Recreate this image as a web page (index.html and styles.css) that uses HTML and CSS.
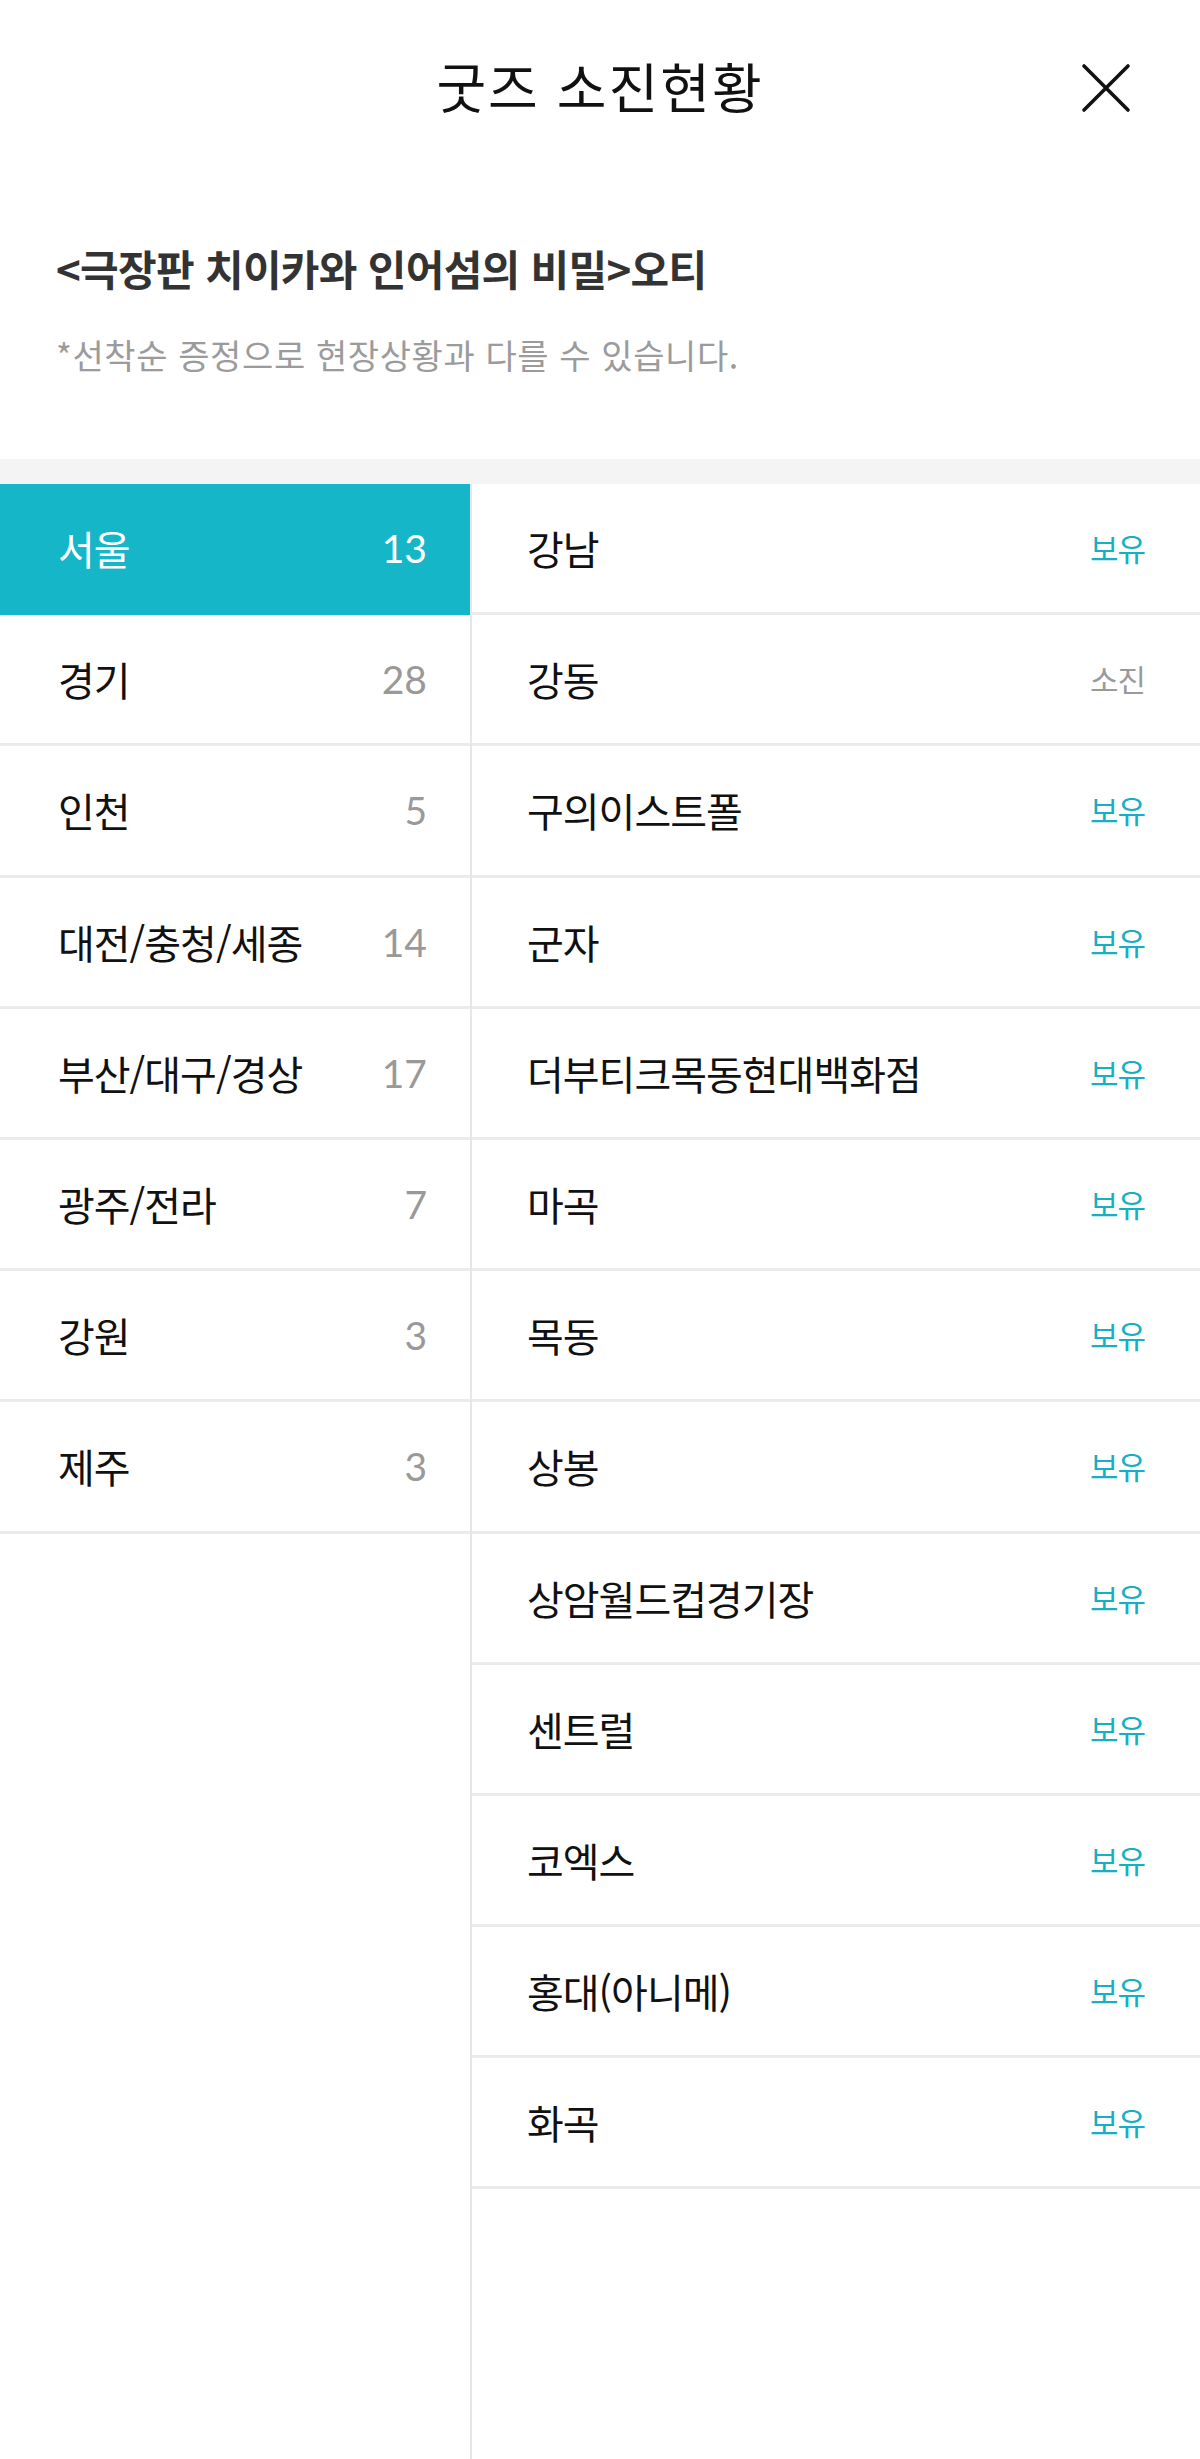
FILE: index.html
```html
<!DOCTYPE html>
<html lang="ko">
<head>
<meta charset="utf-8">
<title>굿즈 소진현황</title>
<link rel="stylesheet" href="styles.css">
</head>
<body>
<div class="page">
  <header class="header">
    <span></span>
    <h1 class="title">굿즈 소진현황</h1>
    <button class="close" aria-label="닫기">
      <svg width="52" height="52" viewBox="0 0 52 52"><path d="M4 4 L48 48 M48 4 L4 48" stroke="#111" stroke-width="3.6" stroke-linecap="round" fill="none"/></svg>
    </button>
  </header>
  <section class="info">
    <h2 class="movie">&lt;극장판 치이카와 인어섬의 비밀&gt;오티</h2>
    <p class="note">*선착순 증정으로 현장상황과 다를 수 있습니다.</p>
  </section>
  <div class="band"></div>
  <main class="lists">
    <ul class="regions">
      <li class="region active"><span class="rname">서울</span><span class="rcount">13</span></li>
      <li class="region"><span class="rname">경기</span><span class="rcount">28</span></li>
      <li class="region"><span class="rname">인천</span><span class="rcount">5</span></li>
      <li class="region"><span class="rname">대전/충청/세종</span><span class="rcount">14</span></li>
      <li class="region"><span class="rname">부산/대구/경상</span><span class="rcount">17</span></li>
      <li class="region"><span class="rname">광주/전라</span><span class="rcount">7</span></li>
      <li class="region"><span class="rname">강원</span><span class="rcount">3</span></li>
      <li class="region"><span class="rname">제주</span><span class="rcount">3</span></li>
    </ul>
    <ul class="theaters">
      <li class="theater"><span class="tname">강남</span><span class="status have">보유</span></li>
      <li class="theater"><span class="tname">강동</span><span class="status out">소진</span></li>
      <li class="theater"><span class="tname">구의이스트폴</span><span class="status have">보유</span></li>
      <li class="theater"><span class="tname">군자</span><span class="status have">보유</span></li>
      <li class="theater"><span class="tname">더부티크목동현대백화점</span><span class="status have">보유</span></li>
      <li class="theater"><span class="tname">마곡</span><span class="status have">보유</span></li>
      <li class="theater"><span class="tname">목동</span><span class="status have">보유</span></li>
      <li class="theater"><span class="tname">상봉</span><span class="status have">보유</span></li>
      <li class="theater"><span class="tname">상암월드컵경기장</span><span class="status have">보유</span></li>
      <li class="theater"><span class="tname">센트럴</span><span class="status have">보유</span></li>
      <li class="theater"><span class="tname">코엑스</span><span class="status have">보유</span></li>
      <li class="theater"><span class="tname">홍대(아니메)</span><span class="status have">보유</span></li>
      <li class="theater"><span class="tname">화곡</span><span class="status have">보유</span></li>
    </ul>
  </main>
</div>
</body>
</html>
```

FILE: styles.css
```css
* { box-sizing: border-box; }
html, body { margin: 0; padding: 0; background: #fff; }
body {
  font-family: "Noto Sans CJK KR", "Noto Sans", sans-serif;
  color: #111;
}
.page {
  min-height: 2459px;
  display: flex;
  flex-direction: column;
}
.header {
  height: 176px;
  display: grid;
  grid-template-columns: 1fr auto 1fr;
  align-items: center;
}
.title {
  margin: 0;
  font-size: 54px;
  font-weight: 400;
  line-height: 64px;
  letter-spacing: 2px;
  color: #111;
  position: relative;
  top: -2px;
}
.close {
  justify-self: end;
  margin-right: 68px;
  padding: 0;
  border: 0;
  background: none;
  width: 52px;
  height: 52px;
  display: block;
}
.close svg { display: block; }
.info {
  padding: 64px 56px 82px;
}
.movie {
  margin: 0;
  font-size: 42px;
  line-height: 56px;
  font-weight: 700;
  letter-spacing: -0.7px;
  color: #333;
}
.note {
  margin: 37px 0 0;
  font-size: 34px;
  line-height: 44px;
  letter-spacing: 0.6px;
  color: #9b9b9b;
}
.band {
  height: 25px;
  background: #f4f4f4;
}
.lists {
  flex: 1;
  display: flex;
}
.regions, .theaters {
  list-style: none;
  margin: 0;
  padding: 0;
}
.regions {
  width: 472px;
  border-right: 2px solid #e6e6e6;
  flex: none;
}
.theaters {
  flex: 1;
}
.region, .theater {
  height: 131.2px;
  display: flex;
  align-items: center;
  justify-content: space-between;
  border-bottom: 3px solid #ebebeb;
}
.region {
  padding: 0 43px 0 58px;
}
.region.active {
  background: #16b6c9;
  border-bottom-color: #16b6c9;
}
.rname, .tname {
  font-size: 40px;
  letter-spacing: -1px;
  line-height: 50px;
  color: #111;
}
.rcount {
  font-family: Lato, "Noto Sans", sans-serif;
  font-size: 39px;
  font-weight: 400;
  line-height: 50px;
  color: #999;
}
.region.active .rname, .region.active .rcount { color: #fff; }
.theater {
  padding: 0 55px 0 55px;
}
.status {
  font-size: 31px;
  letter-spacing: -1px;
  line-height: 40px;
}
.status.have { color: #16b0c4; }
.status.out { color: #9a9a9a; }
```
